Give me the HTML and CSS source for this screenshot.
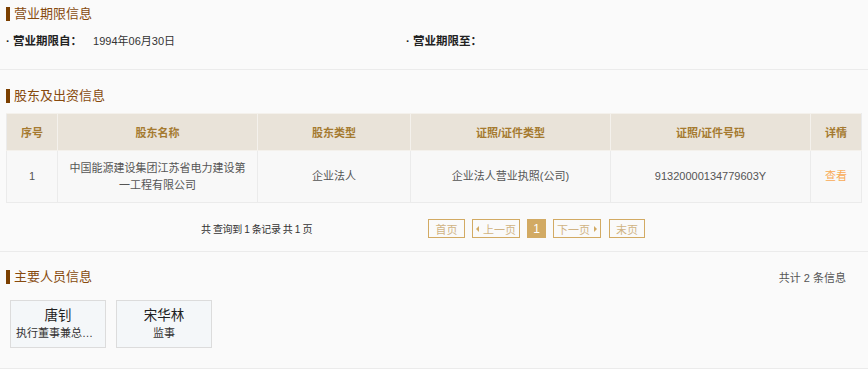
FILE: index.html
```html
<!DOCTYPE html>
<html lang="zh-CN">
<head>
    <meta charset="UTF-8">
    <meta name="viewport" content="width=device-width, initial-scale=1.0">
    <title>企业信息</title>
    <link rel="stylesheet" href="styles.css">
</head>
<body>
    <div class="section section-term">
        <h2 class="section-title"><span class="bar"></span>营业期限信息</h2>
        <div class="info-row">
            <div class="info-item">
                <span class="info-label">· 营业期限自：</span>
                <span class="info-value">1994年06月30日</span>
            </div>
            <div class="info-item">
                <span class="info-label">· 营业期限至：</span>
                <span class="info-value"></span>
            </div>
        </div>
    </div>

    <div class="section section-holders">
        <h2 class="section-title"><span class="bar"></span>股东及出资信息</h2>
        <table class="data-table">
            <colgroup>
                <col style="width: 51px">
                <col style="width: 200px">
                <col style="width: 153px">
                <col style="width: 200px">
                <col style="width: 200px">
                <col style="width: 51px">
            </colgroup>
            <thead>
                <tr>
                    <th>序号</th>
                    <th>股东名称</th>
                    <th>股东类型</th>
                    <th>证照/证件类型</th>
                    <th>证照/证件号码</th>
                    <th>详情</th>
                </tr>
            </thead>
            <tbody>
                <tr>
                    <td>1</td>
                    <td>中国能源建设集团江苏省电力建设第一工程有限公司</td>
                    <td>企业法人</td>
                    <td>企业法人营业执照(公司)</td>
                    <td>91320000134779603Y</td>
                    <td><a class="detail-link" href="#">查看</a></td>
                </tr>
            </tbody>
        </table>

        <div class="pager">
            <span class="pager-info">共 查询到 1 条记录 共 1 页</span>
            <div class="pages">
                <a class="page-btn btn-first" href="#">首页</a>
                <a class="page-btn btn-prev" href="#">上一页</a>
                <span class="page-btn page-current">1</span>
                <a class="page-btn btn-next" href="#">下一页</a>
                <a class="page-btn btn-last" href="#">末页</a>
            </div>
        </div>
    </div>

    <div class="section section-staff">
        <div class="staff-header">
            <h2 class="section-title"><span class="bar"></span>主要人员信息</h2>
            <span class="staff-count">共计 2 条信息</span>
        </div>
        <div class="staff-list">
            <div class="staff-card">
                <div class="staff-name">唐钊</div>
                <div class="staff-role">执行董事兼总经理</div>
            </div>
            <div class="staff-card">
                <div class="staff-name">宋华林</div>
                <div class="staff-role">监事</div>
            </div>
        </div>
    </div>
</body>
</html>
```

FILE: styles.css
```css
body {
    font-family: "Liberation Sans", "Noto Sans CJK SC", sans-serif;
    font-size: 11px;
    color: #333;
    margin: 0;
    background-color: #fafafa;
}

.section {
    border-bottom: 1px solid #ebebeb;
}

.section-title {
    display: flex;
    align-items: center;
    margin: 0;
    padding-left: 6px;
    font-size: 13px;
    font-weight: normal;
    line-height: 18px;
    color: #874a0e;
}

.bar {
    display: inline-block;
    width: 4px;
    height: 14px;
    margin-right: 4px;
    background-color: #7b3f00;
}

/* 营业期限 */
.section-term {
    padding: 5px 0 18px;
}

.info-row {
    display: grid;
    grid-template-columns: 400px 1fr;
    margin-top: 8px;
    padding-left: 6px;
    line-height: 20px;
}

.info-label {
    display: inline-block;
    width: 84px;
    font-weight: bold;
    color: #222;
    font-size: 11.5px;
}

.info-value {
    color: #333;
}

/* 股东 */
.section-holders {
    padding: 17px 0 13px;
}

.data-table {
    width: 855px;
    margin: 8px 6px 0;
    border-collapse: collapse;
    table-layout: fixed;
    text-align: center;
}

.data-table th {
    height: 36px;
    padding: 0;
    background-color: #e9e3d9;
    color: #a57a30;
    font-weight: bold;
    border: 1px solid #f4f1ec;
}

.data-table td {
    height: 51px;
    padding: 0 9px;
    background-color: #f8f8f8;
    color: #555;
    line-height: 17px;
    border: 1px solid #ebebeb;
}

.data-table th:first-child,
.data-table td:first-child {
    border-left-color: #ebebeb;
}

.data-table th:last-child,
.data-table td:last-child {
    border-right-color: #ebebeb;
}

.detail-link {
    color: #f9aa55;
    text-decoration: none;
}

.pager {
    display: flex;
    align-items: center;
    margin-top: 16px;
    padding-left: 201px;
}

.pager-info {
    width: 227px;
    color: #333;
    font-size: 10px;
    letter-spacing: -0.4px;
}

.pages {
    display: flex;
    gap: 7px;
}

.page-btn {
    display: flex;
    align-items: center;
    justify-content: center;
    box-sizing: border-box;
    height: 19px;
    border: 1px solid #d2aa63;
    color: #d0b383;
    text-decoration: none;
}

.btn-first { width: 37px; }
.btn-prev { width: 48px; }
.btn-next { width: 48px; }
.btn-last { width: 36px; margin-left: 1px; }

.btn-prev::before,
.btn-next::after {
    content: "";
    border-top: 3px solid transparent;
    border-bottom: 3px solid transparent;
}

.btn-prev::before {
    border-right: 3px solid #d2aa63;
    margin-right: 4px;
}

.btn-next::after {
    border-left: 3px solid #d2aa63;
    margin-left: 4px;
}

.page-current {
    width: 19px;
    background-color: #d2aa63;
    color: #fff;
    font-size: 12px;
}

/* 主要人员 */
.section-staff {
    padding: 16px 0 20px;
}

.staff-header {
    display: flex;
    align-items: center;
    justify-content: space-between;
    padding-right: 22px;
}

.staff-count {
    color: #555;
}

.staff-list {
    display: flex;
    gap: 10px;
    margin-top: 14px;
    padding-left: 10px;
}

.staff-card {
    box-sizing: border-box;
    width: 96px;
    height: 48px;
    padding: 6px 5px 0;
    background-color: #f4f7f9;
    border: 1px solid #dcdcdc;
    text-align: center;
}

.staff-name {
    font-size: 13.5px;
    line-height: 18px;
    color: #222;
}

.staff-role {
    line-height: 16px;
    color: #333;
    white-space: nowrap;
    overflow: hidden;
    text-overflow: ellipsis;
}
```
